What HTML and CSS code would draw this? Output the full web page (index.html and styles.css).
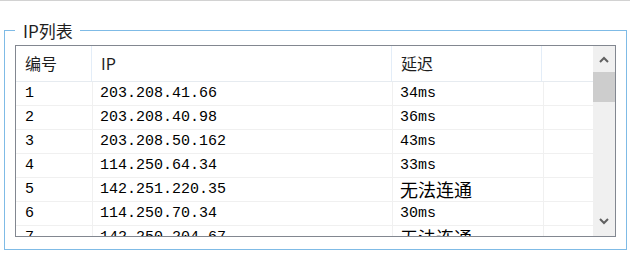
FILE: index.html
```html
<!DOCTYPE html>
<html lang="zh">
<head>
<meta charset="utf-8">
<title>IP列表</title>
<link rel="stylesheet" href="styles.css">
</head>
<body>
<div class="topline"></div>
<fieldset class="group">
  <legend class="group-title">IP列表</legend>
  <div class="list">
    <div class="list-body">
      <div class="list-head">
        <div class="hcell">编号</div>
        <div class="hcell">IP</div>
        <div class="hcell">延迟</div>
        <div class="hcell last"></div>
      </div>
      <div class="row"><div class="cell c1">1</div><div class="cell">203.208.41.66</div><div class="cell">34ms</div><div class="cell last"></div></div>
      <div class="row"><div class="cell c1">2</div><div class="cell">203.208.40.98</div><div class="cell">36ms</div><div class="cell last"></div></div>
      <div class="row"><div class="cell c1">3</div><div class="cell">203.208.50.162</div><div class="cell">43ms</div><div class="cell last"></div></div>
      <div class="row"><div class="cell c1">4</div><div class="cell">114.250.64.34</div><div class="cell">33ms</div><div class="cell last"></div></div>
      <div class="row"><div class="cell c1">5</div><div class="cell">142.251.220.35</div><div class="cell cjk">无法连通</div><div class="cell last"></div></div>
      <div class="row"><div class="cell c1">6</div><div class="cell">114.250.70.34</div><div class="cell">30ms</div><div class="cell last"></div></div>
      <div class="row"><div class="cell c1">7</div><div class="cell">142.250.204.67</div><div class="cell cjk">无法连通</div><div class="cell last"></div></div>
    </div>
    <div class="scrollbar">
      <div class="sb-btn up"><svg width="10" height="7" viewBox="0 0 10 7"><polyline points="1,6 5,2 9,6" fill="none" stroke="#606060" stroke-width="2"/></svg></div>
      <div class="sb-thumb"></div>
      <div class="sb-track"></div>
      <div class="sb-btn down"><svg width="10" height="7" viewBox="0 0 10 7"><polyline points="1,1 5,5 9,1" fill="none" stroke="#606060" stroke-width="2"/></svg></div>
    </div>
  </div>
</fieldset>
</body>
</html>
```
FILE: styles.css
```css
html, body {
  margin: 0;
  background: #ffffff;
}
body {
  font-family: "Noto Sans CJK SC", "Noto Sans", sans-serif;
  color: #1e1e1e;
}
.topline {
  height: 1px;
  background: #d2d2d2;
}
.group {
  margin: 19px 0 0 4px;
  width: 623px;
  box-sizing: border-box;
  border: 1px solid #7fbbe6;
  padding: 0 10px 12px 10px;
  min-width: 0;
}
.group-title {
  padding: 0 7px 0 8px;
  font-size: 17px;
  line-height: 21px;
  color: #1e1e1e;
}
.list {
  margin-top: 4px;
  height: 192px;
  box-sizing: border-box;
  border: 1px solid #828790;
  display: flex;
}
.list-body {
  flex: 1;
  min-width: 0;
  overflow: hidden;
}
.list-head {
  display: grid;
  grid-template-columns: 76px 300px 150px 1fr;
  height: 36px;
  box-sizing: border-box;
  border-bottom: 1px solid #e6ebf0;
}
.hcell {
  border-right: 1px solid #e3edf8;
  padding-left: 9px;
  font-size: 16px;
  line-height: 35px;
  color: #1e1e1e;
}
.hcell.last, .cell.last {
  border-right: none;
}
.row {
  display: grid;
  grid-template-columns: 77px 300px 151px 1fr;
  height: 24px;
  box-sizing: border-box;
  border-bottom: 1px solid #f0f0f0;
}
.cell {
  border-right: 1px solid #f0f0f0;
  padding-left: 7px;
  font-family: "Liberation Mono", monospace;
  font-size: 15px;
  line-height: 23px;
  color: #000000;
  white-space: nowrap;
}
.cell.c1 {
  padding-left: 9px;
}
.cell.cjk {
  font-family: "Noto Sans CJK SC", sans-serif;
  font-size: 18px;
}
.scrollbar {
  width: 22px;
  background: #f0f0f0;
  display: flex;
  flex-direction: column;
}
.sb-btn {
  height: 26px;
  display: flex;
  align-items: center;
  justify-content: center;
  box-sizing: border-box;
}
.sb-btn.down {
  padding-bottom: 4px;
}
.sb-thumb {
  height: 30px;
  background: #cdcdcd;
}
.sb-track {
  flex: 1;
}
```
